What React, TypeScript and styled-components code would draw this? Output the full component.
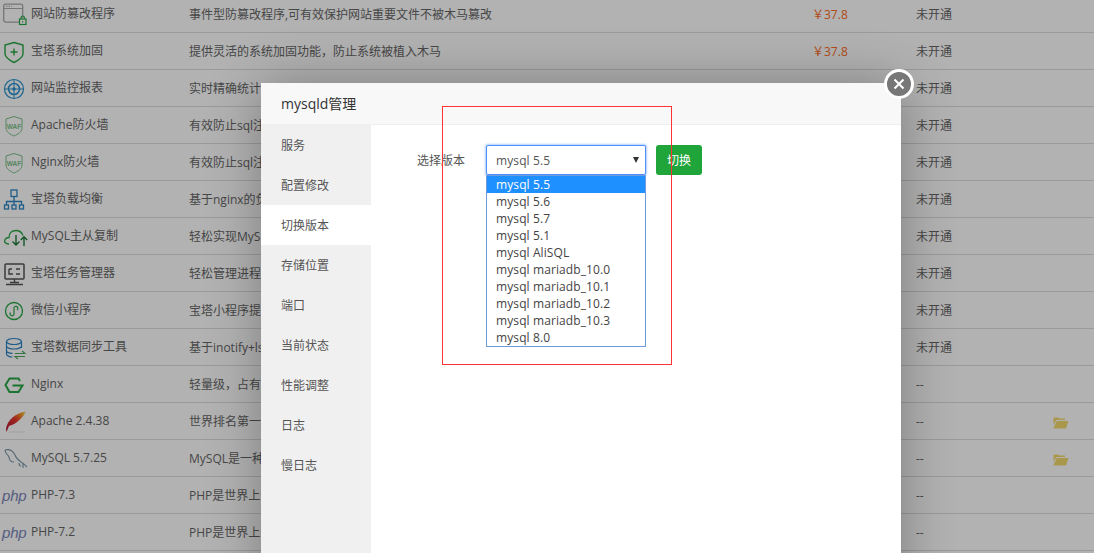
import React from 'react';
import styled, { createGlobalStyle } from 'styled-components';

const Global = createGlobalStyle`
  html, body { margin: 0; padding: 0; height: 100%; overflow: hidden; background: #fff; }
  body { font-family: "Open Sans", "Noto Sans CJK SC", sans-serif; font-size: 12px; color: #666; }
`;

const Page = styled.div`
  position: relative;
  width: 1094px;
  height: 553px;
  overflow: hidden;
`;

/* soft list behind the dialog */
const SoftList = styled.div`
  display: flex;
  flex-direction: column;
  margin-top: -4px;
`;

const Row = styled.div`
  display: grid;
  grid-template-columns: 31px 158px 625px 102px 137px 1fr;
  align-items: center;
  height: 34px;
  padding-top: 2px;
  border-bottom: 1px solid #ddd;
  line-height: 16px;
  white-space: nowrap;
`;

const IconCell = styled.div`
  display: flex;
  align-items: center;
  height: 24px;
  padding-left: 3px;
  svg { display: block; }
`;

const NameCell = styled.div`
  margin-top: -2px;
`;

const DescCell = styled.div`
  overflow: hidden;
`;

const Price = styled.div`
  color: #fc6d26;
  margin-left: -2px;
`;

const FolderCell = styled.div`
  display: flex;
  align-items: center;
  padding-top: 2px;
`;

const PhpMark = styled.span`
  font-family: "Liberation Sans", sans-serif;
  font-style: italic;
  font-size: 15px;
  line-height: 20px;
  letter-spacing: -0.2px;
  color: #7a86b8;
  margin-left: -1px;
`;

/* dim layer */
const Shade = styled.div`
  position: absolute;
  inset: 0;
  background: rgba(0, 0, 0, 0.3);
`;

/* dialog */
const Dialog = styled.div`
  position: absolute;
  left: 261px;
  top: 83px;
  width: 640px;
  height: 520px;
  background: #fff;
  box-shadow: 1px 1px 50px rgba(0, 0, 0, 0.3);
  display: flex;
  flex-direction: column;
  color: #555;
`;

const DialogTitle = styled.div`
  height: 41px;
  line-height: 42px;
  padding-left: 20px;
  box-sizing: content-box;
  background: #f8f8f8;
  border-bottom: 1px solid #eee;
  font-size: 14px;
  color: #333;
`;

const CloseBtn = styled.div`
  position: absolute;
  right: -13px;
  top: -14px;
  width: 30px;
  height: 30px;
  box-sizing: border-box;
  border: 3px solid #fff;
  border-radius: 50%;
  background: #777;
  display: flex;
  align-items: center;
  justify-content: center;
`;

const DialogBody = styled.div`
  flex: 1;
  display: flex;
`;

const SideMenu = styled.div`
  width: 110px;
  background: #f0f0f0;
  display: flex;
  flex-direction: column;
`;

const SideItem = styled.div<{ $active?: boolean }>`
  height: 40px;
  line-height: 42px;
  padding-left: 20px;
  color: #555;
  background: ${({ $active }) => ($active ? '#fff' : 'transparent')};
`;

const Content = styled.div`
  flex: 1;
  padding: 20px 0 0 46px;
`;

const VersionRow = styled.div`
  display: flex;
  align-items: flex-start;
`;

const FieldLabel = styled.div`
  width: 69px;
  height: 30px;
  line-height: 32px;
  color: #555;
`;

const SelectWrap = styled.div`
  position: relative;
  width: 160px;
  margin-right: 10px;
`;

const SelectBox = styled.div`
  height: 30px;
  box-sizing: border-box;
  border: 1px solid #4d90fe;
  border-radius: 2px;
  box-shadow: 0 0 2px 1px rgba(77, 144, 254, 0.45);
  background: #fff;
  padding-left: 9px;
  line-height: 29px;
  color: #555;
  letter-spacing: 0.1px;
  display: flex;
  justify-content: space-between;
  align-items: center;
`;

const Caret = styled.span`
  width: 0;
  height: 0;
  margin-right: 6px;
  border-left: 3.5px solid transparent;
  border-right: 3.5px solid transparent;
  border-top: 6px solid #333;
`;

const OptionList = styled.div`
  position: absolute;
  left: 0;
  top: 30px;
  width: 160px;
  box-sizing: border-box;
  border: 1px solid #6f9bdc;
  background: #fff;
`;

const Option = styled.div<{ $selected?: boolean }>`
  height: 17px;
  line-height: 17px;
  padding-left: 9px;
  letter-spacing: 0.1px;
  color: ${({ $selected }) => ($selected ? '#fff' : '#444')};
  background: ${({ $selected }) => ($selected ? '#1e90ff' : 'transparent')};
`;

const SwitchBtn = styled.button`
  width: 46px;
  height: 30px;
  padding: 0;
  border: none;
  border-radius: 3px;
  background: #20a53a;
  color: #fff;
  font: inherit;
  font-size: 12px;
`;

const Highlight = styled.div`
  position: absolute;
  left: 442px;
  top: 106px;
  width: 230px;
  height: 259px;
  box-sizing: border-box;
  border: 1px solid #f33;
`;

/* icons */
const W = ({ children, w = 24, h = 24 }: { children: React.ReactNode; w?: number; h?: number }) => (
  <svg width={w} height={h} viewBox={`0 0 ${w} ${h}`} fill="none">{children}</svg>
);

const icons: Record<string, React.ReactNode> = {
  tamper: (
    <W>
      <rect x="0.7" y="1.2" width="19" height="18" rx="2" stroke="#a9a9ab" strokeWidth="1.3" />
      <path d="M1 5.5h18.5" stroke="#a9a9ab" />
      <path d="M3 3.3h6" stroke="#a9a9ab" strokeDasharray="1.5 1" />
      <rect x="16" y="15" width="8" height="7" rx="0.5" fill="#fff" />
      <rect x="16.5" y="16" width="6.5" height="5.5" stroke="#28a745" strokeWidth="1.2" fill="#fff" />
      <path d="M18 16v-1.3a1.7 1.7 0 0 1 3.4 0V16" stroke="#28a745" strokeWidth="1.1" />
      <path d="M19.7 18v1.5" stroke="#28a745" />
    </W>
  ),
  shield: (
    <W>
      <path d="M11 2.500 L20 5 V13.500 C20 17.500 15 20.500 11 22.500 C7 20.500 2 17.500 2 13.500 V5 Z" stroke="#28a745" strokeWidth="1.400" />
      <path d="M11 8.500v7M7.500 12h7" stroke="#28a745" strokeWidth="1.400" />
    </W>
  ),
  target: (
    <W>
      <circle cx="11" cy="12" r="9.500" stroke="#2d93cf" strokeWidth="1.2" />
      <circle cx="11" cy="12" r="5.500" stroke="#2d93cf" strokeWidth="1.6" />
      <circle cx="11" cy="12" r="1.800" fill="#2d93cf" />
      <path d="M1 12h20M11 2v20" stroke="#2d93cf" strokeWidth="1" />
    </W>
  ),
  waf: (
    <W>
      <path d="M11 2.500 L19 5 V14 C19 18 14.500 20.500 11 22 C7.500 20.500 3 18 3 14 V5 Z" stroke="#7cc08a" strokeWidth="1" />
      <text x="11" y="14.500" textAnchor="middle" fontSize="6.500" fontWeight="700" fontFamily="Liberation Sans" fill="#7cc08a">WAF</text>
    </W>
  ),
  balance: (
    <W>
      <g stroke="#2d86c4" strokeWidth="1.3">
        <rect x="8" y="2" width="6" height="6.500" />
        <path d="M11 8.500v5M3.500 17v-3.500h15V17M11 13.500V17" />
        <rect x="1.500" y="17" width="4" height="4" />
        <rect x="9" y="17" width="4" height="4" />
        <rect x="16.500" y="17" width="4" height="4" />
      </g>
    </W>
  ),
  cloud: (
    <W w={26}>
      <path d="M6 19 C2 19 1 16.500 2 14.500 C3 12.500 5 12.500 6 12.500 C6 8 9 5.500 13 5.500 C17 5.500 19 8 20 10.500" stroke="#28a745" strokeWidth="1.3" />
      <path d="M13 10v10M9.500 16.500l3.500 3.500 3.500-3.500" stroke="#1e7a38" strokeWidth="1.4" />
      <path d="M21 21V12M17.800 15l3.200-3.200 3.200 3.200" stroke="#1e7a38" strokeWidth="1.4" />
    </W>
  ),
  monitor: (
    <W>
      <rect x="2" y="2" width="19" height="15" rx="1" stroke="#555" strokeWidth="1.500" />
      <path d="M6 7h3M6 7v5h4M13 7h4M13 12h4" stroke="#555" strokeWidth="1.400" />
      <path d="M11.500 17v3M7 20.500h9M3 22.500h17" stroke="#555" strokeWidth="1.400" />
    </W>
  ),
  wechat: (
    <W>
      <circle cx="11" cy="12" r="8.500" stroke="#28a745" strokeWidth="1.300" />
      <path d="M7.500 13.500 A2 2 0 1 0 11 14.500 V10 A2 2 0 1 1 14 11" stroke="#28a745" strokeWidth="1.200" />
    </W>
  ),
  sync: (
    <W>
      <ellipse cx="11" cy="5.500" rx="7.500" ry="3" stroke="#2d86c4" strokeWidth="1.200" />
      <path d="M3.500 5.500V18c0 1.600 3 3 6 3M18.500 5.500V12M3.500 10c0 1.600 3.300 3 7.500 3s7.500-1.400 7.500-3M3.500 14.500c0 1.500 2.500 2.700 6 2.900" stroke="#2d86c4" strokeWidth="1.200" />
      <path d="M12 17.500h10l-3-2.500M22 20.500H12l3 2.500" stroke="#4aa860" strokeWidth="1.100" />
    </W>
  ),
  nginx: (
    <W>
      <path d="M17.500 7.500 L16 5 H7 L3 11.500 L7 18.500 H16 L20 12 H10" transform="translate(-0.500 0.500)" stroke="#28a745" strokeWidth="2" strokeLinejoin="miter" />
    </W>
  ),
  apache: (
    <W>
      <defs>
        <linearGradient id="feather" x1="0" y1="1" x2="1" y2="0">
          <stop offset="0" stopColor="#a8123a" />
          <stop offset="0.55" stopColor="#e8392e" />
          <stop offset="0.85" stopColor="#f5a623" />
          <stop offset="1" stopColor="#e8e0a0" />
        </linearGradient>
      </defs>
      <path d="M3 19 C4 11 12 3 23 1.500 C20 7 14 14 6 16 L3.500 22 Z" fill="url(#feather)" />
      <path d="M6 22h16" stroke="#cfcfcf" strokeWidth="1" opacity="0.5" />
    </W>
  ),
  mysql: (
    <W w={26}>
      <path d="M2 3 C6 2 10 4 12 8 C13 11 15 13 18 15 C20 16 22 18 24 20 M2 3 C2 7 5 7 6 10 C6 13 8 15 11 15 M16 16 C16 18 17 19 18 19 M20 17v4" stroke="#7d97a8" strokeWidth="1.100" />
    </W>
  ),
};

const FolderIcon = () => (
  <svg width="16" height="12" viewBox="0 0 16 12">
    <path d="M0.500 1.500 L1 0.500 H5 L6 1.500 H12 V3 H3.500 L0.500 8 Z" fill="#f2d96e" />
    <path d="M3.800 4 H15.500 L13 11.500 H0.300 Z" fill="#f2d96e" />
  </svg>
);

const softs = [
  { icon: 'tamper', name: '网站防篡改程序', desc: '事件型防篡改程序,可有效保护网站重要文件不被木马篡改', price: '￥37.8', status: '未开通' },
  { icon: 'shield', name: '宝塔系统加固', desc: '提供灵活的系统加固功能，防止系统被植入木马', price: '￥37.8', status: '未开通' },
  { icon: 'target', name: '网站监控报表', desc: '实时精确统计', status: '未开通' },
  { icon: 'waf', name: 'Apache防火墙', desc: '有效防止sql注入', status: '未开通' },
  { icon: 'waf', name: 'Nginx防火墙', desc: '有效防止sql注入', status: '未开通' },
  { icon: 'balance', name: '宝塔负载均衡', desc: '基于nginx的负载均衡', status: '未开通' },
  { icon: 'cloud', name: 'MySQL主从复制', desc: '轻松实现MySQL主从', status: '未开通' },
  { icon: 'monitor', name: '宝塔任务管理器', desc: '轻松管理进程', status: '未开通' },
  { icon: 'wechat', name: '微信小程序', desc: '宝塔小程序提供', status: '未开通' },
  { icon: 'sync', name: '宝塔数据同步工具', desc: '基于inotify+lsyncd', status: '未开通' },
  { icon: 'nginx', name: 'Nginx', desc: '轻量级，占有内存少', status: '--' },
  { icon: 'apache', name: 'Apache 2.4.38', desc: '世界排名第一', status: '--', folder: true },
  { icon: 'mysql', name: 'MySQL 5.7.25', desc: 'MySQL是一种关系数据库', status: '--', folder: true },
  { icon: 'php', name: 'PHP-7.3', desc: 'PHP是世界上最好的语言', status: '--' },
  { icon: 'php', name: 'PHP-7.2', desc: 'PHP是世界上最好的语言', status: '--' },
];

const menu = ['服务', '配置修改', '切换版本', '存储位置', '端口', '当前状态', '性能调整', '日志', '慢日志'];

const versions = [
  'mysql 5.5', 'mysql 5.6', 'mysql 5.7', 'mysql 5.1', 'mysql AliSQL',
  'mysql mariadb_10.0', 'mysql mariadb_10.1', 'mysql mariadb_10.2', 'mysql mariadb_10.3', 'mysql 8.0',
];

export default function App() {
  return (
    <Page>
      <Global />
      <SoftList>
        {softs.map((s) => (
          <Row key={s.name}>
            <IconCell>{s.icon === 'php' ? <PhpMark>php</PhpMark> : icons[s.icon]}</IconCell>
            <NameCell>{s.name}</NameCell>
            <DescCell>{s.desc}</DescCell>
            <Price>{s.price}</Price>
            <div>{s.status}</div>
            <FolderCell>{s.folder && <FolderIcon />}</FolderCell>
          </Row>
        ))}
      </SoftList>
      <Shade />
      <Dialog>
        <DialogTitle>mysqld管理</DialogTitle>
        <CloseBtn>
          <svg width="12" height="12" viewBox="0 0 12 12">
            <path d="M1.500 1.500l9 9M10.500 1.500l-9 9" stroke="#fff" strokeWidth="2" />
          </svg>
        </CloseBtn>
        <DialogBody>
          <SideMenu>
            {menu.map((m) => (
              <SideItem key={m} $active={m === '切换版本'}>{m}</SideItem>
            ))}
          </SideMenu>
          <Content>
            <VersionRow>
              <FieldLabel>选择版本</FieldLabel>
              <SelectWrap>
                <SelectBox>
                  mysql 5.5
                  <Caret />
                </SelectBox>
                <OptionList>
                  {versions.map((v, i) => (
                    <Option key={v} $selected={i === 0}>{v}</Option>
                  ))}
                </OptionList>
              </SelectWrap>
              <SwitchBtn>切换</SwitchBtn>
            </VersionRow>
          </Content>
        </DialogBody>
      </Dialog>
      <Highlight />
    </Page>
  );
}
